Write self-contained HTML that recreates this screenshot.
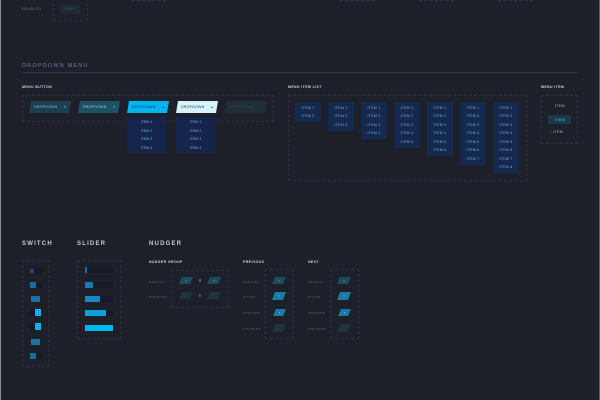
<!DOCTYPE html>
<html><head><style>
*{margin:0;padding:0;box-sizing:border-box}
body{width:600px;height:400px;background:#1e2029;position:relative;overflow:hidden;font-family:"Liberation Sans",sans-serif;color:#cfd6e0}
.a{position:absolute}
.box{position:absolute;border:1px dashed #33284f}
.t{position:absolute;font-size:3.5px;letter-spacing:.4px;white-space:nowrap}
.h{position:absolute;font-size:6px;font-weight:bold;letter-spacing:1.2px;color:#c8ccd6}
.lab{position:absolute;font-size:3.5px;font-weight:bold;letter-spacing:.4px;color:#d0d4dc}
.btn{position:absolute;height:12px;width:42px;clip-path:polygon(2px 0,100% 0,calc(100% - 2px) 100%,0 100%)}
.btn span{position:absolute;left:5px;top:4px;font-size:3.5px;letter-spacing:.3px}
.btn i{position:absolute;right:5px;top:3.5px;font-size:3.5px;font-style:normal}
.col{position:absolute;background:#15294e;width:26px}
.col div{height:8.5px;font-size:3.5px;color:#6fb3e6;text-align:center;line-height:8.5px;letter-spacing:.3px}
.dd{position:absolute;background:#15244a;width:39px;top:117px;height:36px;padding-top:1px}
.dd div{height:8.5px;font-size:3.5px;color:#6fb3e6;text-align:center;line-height:8.5px}
.tr{position:absolute;background:#181926;height:6px}
.nb{position:absolute;width:14px;height:7px;clip-path:polygon(3px 0,100% 0,calc(100% - 3px) 100%,0 100%);font-size:4px;color:#8fd;text-align:center;line-height:7px}
.rl{position:absolute;font-size:3px;color:#5b6070;letter-spacing:.4px}
</style></head><body>
<div class="a" style="left:0;top:0;width:1px;height:400px;background:#8a8d94"></div>
<div class="a" style="right:0;top:0;width:1px;height:400px;background:#5a5d64"></div>

<div class="t" style="left:21px;top:7px;color:#6a6e7a">DISABLED</div>
<div class="box" style="left:53px;top:-2px;width:35px;height:23px"></div>
<div class="a" style="left:60px;top:4px;width:20px;height:10px;background:#1f2a36;border-radius:3px"></div>
<div class="t" style="left:64px;top:7px;color:#2a6a80">CHIP</div>
<div class="a" style="left:132px;top:0;width:34px;border-top:1px dashed #3a2c5c"></div>
<div class="a" style="left:340px;top:0;width:35px;border-top:1px dashed #3a2c5c"></div>
<div class="a" style="left:419px;top:0;width:35px;border-top:1px dashed #3a2c5c"></div>
<div class="a" style="left:498px;top:0;width:35px;border-top:1px dashed #3a2c5c"></div>

<div class="a" style="left:22px;top:63px;font-size:5.5px;letter-spacing:1.2px;color:#7c6fb3">DROPDOWN MENU</div>
<div class="a" style="left:22px;top:72px;width:556px;height:1px;background:#33314a"></div>

<div class="lab" style="left:22px;top:85px">MENU BUTTON</div>
<div class="box" style="left:22px;top:95px;width:252px;height:27px"></div>
<div class="btn" style="left:29px;top:101px;background:#1d3f52"><span style="color:#8cc">DROPDOWN</span><i style="color:#6cf">▾</i></div>
<div class="btn" style="left:78px;top:101px;background:#1e5066"><span style="color:#9dd">DROPDOWN</span><i style="color:#6cf">▾</i></div>
<div class="btn" style="left:127px;top:101px;background:#00b4f0"><span style="color:#0a2a40">DROPDOWN</span><i style="color:#0a2a40">▴</i></div>
<div class="btn" style="left:176px;top:101px;background:#d6f2fb"><span style="color:#1a3050">DROPDOWN</span><i style="color:#1a3050">▴</i></div>
<div class="btn" style="left:225px;top:101px;background:#1f2e39"><span style="color:#2a4a5a">DROPDOWN</span></div>
<div class="dd" style="left:127px"><div>ITEM 1</div><div>ITEM 2</div><div>ITEM 3</div><div>ITEM 4</div></div>
<div class="dd" style="left:176px"><div>ITEM 1</div><div>ITEM 2</div><div>ITEM 3</div><div>ITEM 4</div></div>

<div class="lab" style="left:288px;top:85px">MENU ITEM LIST</div>
<div class="box" style="left:288px;top:95px;width:239px;height:86px"></div>
<div class="col" style="left:295px;top:102px;padding-top:1.5px;height:20px"><div>ITEM 1</div><div>ITEM 2</div></div>
<div class="col" style="left:328px;top:102px;padding-top:1.5px;height:29px"><div>ITEM 1</div><div>ITEM 2</div><div>ITEM 3</div></div>
<div class="col" style="left:361px;top:102px;padding-top:1.5px;height:37px"><div>ITEM 1</div><div>ITEM 2</div><div>ITEM 3</div><div>ITEM 4</div></div>
<div class="col" style="left:394px;top:102px;padding-top:1.5px;height:46px"><div>ITEM 1</div><div>ITEM 2</div><div>ITEM 3</div><div>ITEM 4</div><div>ITEM 5</div></div>
<div class="col" style="left:427px;top:102px;padding-top:1.5px;height:54px"><div>ITEM 1</div><div>ITEM 2</div><div>ITEM 3</div><div>ITEM 4</div><div>ITEM 5</div><div>ITEM 6</div></div>
<div class="col" style="left:460px;top:102px;padding-top:1.5px;height:63px"><div>ITEM 1</div><div>ITEM 2</div><div>ITEM 3</div><div>ITEM 4</div><div>ITEM 5</div><div>ITEM 6</div><div>ITEM 7</div></div>
<div class="col" style="left:493px;top:102px;padding-top:1.5px;height:71px"><div>ITEM 1</div><div>ITEM 2</div><div>ITEM 3</div><div>ITEM 4</div><div>ITEM 5</div><div>ITEM 6</div><div>ITEM 7</div><div>ITEM 8</div></div>

<div class="lab" style="left:541px;top:85px">MENU ITEM</div>
<div class="box" style="left:541px;top:95px;width:37px;height:49px"></div>
<div class="t" style="left:555px;top:104px;color:#9cc">ITEM</div>
<div class="a" style="left:548px;top:115px;width:23px;height:9px;background:#1c3a45"></div>
<div class="t" style="left:555px;top:118px;color:#5cc8e8">ITEM</div>
<div class="t" style="left:550px;top:130px;color:#9cc"><span style="color:#4ad">•</span> ITEM</div>

<div class="h" style="left:22px;top:241px">SWITCH</div>
<div class="h" style="left:77px;top:241px">SLIDER</div>
<div class="h" style="left:149px;top:241px">NUDGER</div>

<div class="box" style="left:22px;top:260px;width:27px;height:107px"></div>
<div class="tr" style="left:30px;top:268px;width:12px"></div><div class="a" style="left:30px;top:269px;width:4px;height:4px;background:#1a4a80"></div>
<div class="tr" style="left:30px;top:282px;width:12px"></div><div class="a" style="left:30px;top:282px;width:6px;height:6px;background:#1a6aa0"></div>
<div class="a" style="left:31px;top:296px;width:9px;height:6px;background:#1d70a8"></div>
<div class="tr" style="left:30px;top:310px;width:12px"></div><div class="a" style="left:35px;top:309px;width:6px;height:7px;background:#00b4f0"></div>
<div class="tr" style="left:30px;top:324px;width:12px"></div><div class="a" style="left:35px;top:323px;width:6px;height:7px;background:#00b4f0"></div>
<div class="a" style="left:31px;top:339px;width:9px;height:6px;background:#1d70a8"></div>
<div class="tr" style="left:30px;top:353px;width:12px"></div><div class="a" style="left:30px;top:353px;width:6px;height:6px;background:#1a6aa0"></div>

<div class="box" style="left:77px;top:260px;width:44px;height:79px"></div>
<div class="tr" style="left:85px;top:267px;width:28px"></div><div class="a" style="left:85px;top:267px;width:2px;height:6px;background:#1a6aa0"></div>
<div class="tr" style="left:85px;top:282px;width:28px"></div><div class="a" style="left:85px;top:282px;width:8px;height:6px;background:#1878b0"></div>
<div class="tr" style="left:85px;top:296px;width:28px"></div><div class="a" style="left:85px;top:296px;width:15px;height:6px;background:#1888c0"></div>
<div class="tr" style="left:85px;top:310px;width:28px"></div><div class="a" style="left:85px;top:310px;width:21px;height:6px;background:#10a0d8"></div>
<div class="a" style="left:85px;top:325px;width:28px;height:6px;background:#00b8f2"></div>

<div class="lab" style="left:149px;top:260px">NUDGER GROUP</div>
<div class="box" style="left:171px;top:270px;width:58px;height:38px"></div>
<div class="rl" style="left:149px;top:280px">DEFAULT</div>
<div class="rl" style="left:149px;top:295px">DISABLED</div>
<div class="nb" style="left:179px;top:277px;background:#1e4a5c">‹</div>
<div class="a" style="left:199px;top:279px;width:2px;height:3px;background:#1a6aa0"></div>
<div class="nb" style="left:207px;top:277px;background:#1e4a5c">›</div>
<div class="nb" style="left:179px;top:292px;background:#1d3440;color:#2a5060">‹</div>
<div class="a" style="left:199px;top:294px;width:2px;height:3px;background:#1a5a90"></div>
<div class="nb" style="left:207px;top:292px;background:#1d3440;color:#2a5060">›</div>

<div class="lab" style="left:243px;top:260px">PREVIOUS</div>
<div class="box" style="left:265px;top:269px;width:29px;height:70px"></div>
<div class="rl" style="left:243px;top:280px">DEFAULT</div>
<div class="rl" style="left:243px;top:295px">HOVER</div>
<div class="rl" style="left:243px;top:311px">PRESSED</div>
<div class="rl" style="left:243px;top:327px">DISABLED</div>
<div class="nb" style="left:272px;top:277px;background:#1e4a5c">‹</div>
<div class="nb" style="left:272px;top:292px;height:8px;background:#1a7aa8;color:#cff">‹</div>
<div class="nb" style="left:273px;top:309px;width:13px;background:#1a7aa8;color:#cff">‹</div>
<div class="nb" style="left:272px;top:324px;height:8px;background:#1d3440;color:#2a5060">‹</div>

<div class="lab" style="left:308px;top:260px">NEXT</div>
<div class="box" style="left:330px;top:269px;width:29px;height:70px"></div>
<div class="rl" style="left:308px;top:280px">DEFAULT</div>
<div class="rl" style="left:308px;top:295px">HOVER</div>
<div class="rl" style="left:308px;top:311px">PRESSED</div>
<div class="rl" style="left:308px;top:327px">DISABLED</div>
<div class="nb" style="left:337px;top:277px;background:#1e4a5c">›</div>
<div class="nb" style="left:337px;top:292px;height:8px;background:#1a7aa8;color:#cff">›</div>
<div class="nb" style="left:338px;top:309px;width:13px;background:#1a7aa8;color:#cff">›</div>
<div class="nb" style="left:337px;top:324px;height:8px;background:#1d3440;color:#2a5060">›</div>
</body></html>
